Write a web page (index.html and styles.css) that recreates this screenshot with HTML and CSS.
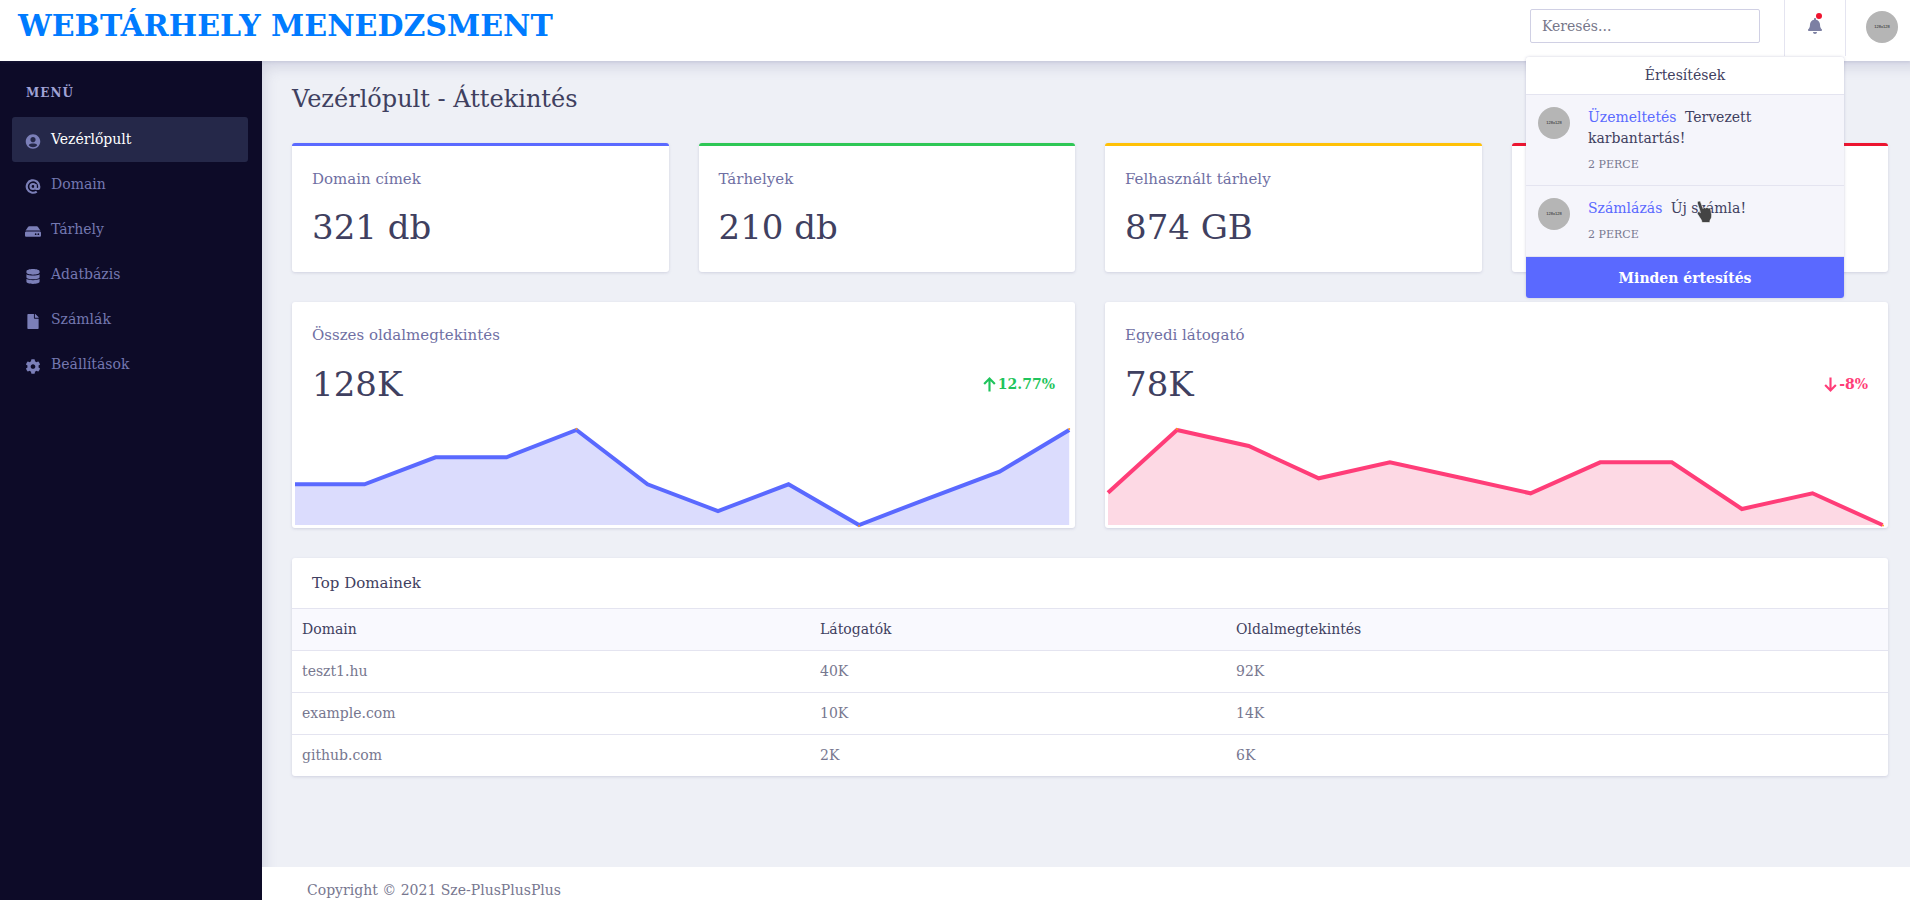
FILE: index.html
```html
<!DOCTYPE html>
<html lang="hu">
<head>
<meta charset="UTF-8">
<meta name="viewport" content="width=device-width, initial-scale=1.0">
<title>Webtárhely menedzsment</title>
<link rel="stylesheet" href="styles.css">
</head>
<body>
<header class="topbar">
    <div class="brand">WEBTÁRHELY MENEDZSMENT</div>
    <input class="search" type="text" placeholder="Keresés...">
    <div class="bell-box">
        <svg class="bell" viewBox="0 0 448 512"><path d="M224 512c35.32 0 63.97-28.65 63.97-64H160.03c0 35.35 28.65 64 63.97 64zm215.39-149.71c-19.32-20.76-55.47-51.99-55.47-154.29 0-77.7-54.48-139.9-127.94-155.16V32c0-17.67-14.32-32-31.98-32s-31.98 14.33-31.98 32v20.84C118.56 68.1 64.08 130.3 64.08 208c0 102.3-36.15 133.53-55.47 154.29-6 6.45-8.66 14.16-8.61 21.71.11 16.4 12.98 32 32.1 32h383.8c19.12 0 32-15.6 32.1-32 .05-7.55-2.61-15.27-8.61-21.71z"/></svg>
        <span class="dot"></span>
    </div>
    <div class="user-box"><div class="avatar">128x128</div></div>

    <!-- ertesitesek lenyilo -->
    <div class="notif">
        <div class="notif-head">Értesítések</div>
        <div class="notif-item">
            <div class="avatar">128x128</div>
            <div class="notif-body">
                <div class="notif-text"><a>Üzemeltetés</a> Tervezett karbantartás!</div>
                <div class="notif-time">2 PERCE</div>
            </div>
        </div>
        <div class="notif-item short">
            <div class="avatar">128x128</div>
            <div class="notif-body">
                <div class="notif-text"><a>Számlázás</a> Új számla!</div>
                <div class="notif-time">2 PERCE</div>
            </div>
        </div>
        <div class="notif-all">Minden értesítés</div>
    </div>
</header>

<div class="wrapper">
    <aside class="sidebar">
        <div class="menu-title">MENÜ</div>
        <a class="menu-item active">
            <svg viewBox="0 0 496 512"><path d="M248 8C111 8 0 119 0 256s111 248 248 248 248-111 248-248S385 8 248 8zm0 96c48.6 0 88 39.4 88 88s-39.4 88-88 88-88-39.4-88-88 39.4-88 88-88zm0 344c-58.7 0-111.3-26.6-146.5-68.2 18.8-35.4 55.6-59.8 98.5-59.8 2.4 0 4.8.4 7.1 1.1 13 4.2 26.6 6.9 40.9 6.9 14.3 0 28-2.7 40.9-6.9 2.3-.7 4.7-1.1 7.1-1.1 42.9 0 79.7 24.4 98.5 59.8C359.3 421.4 306.7 448 248 448z"/></svg>
            Vezérlőpult
        </a>
        <a class="menu-item">
            <svg class="stroke" viewBox="0 0 24 24"><circle cx="12" cy="12" r="4"/><path d="M16 8v5a3 3 0 0 0 6 0v-1a10 10 0 1 0-4 8"/></svg>
            Domain
        </a>
        <a class="menu-item">
            <svg viewBox="0 0 576 512"><path d="M576 304v96c0 26.51-21.49 48-48 48H48c-26.51 0-48-21.49-48-48v-96c0-26.51 21.49-48 48-48h480c26.51 0 48 21.49 48 48zm-48-80a79.557 79.557 0 0 1 30.777 6.165L462.25 85.374A48.003 48.003 0 0 0 422.311 64H153.689a48 48 0 0 0-39.938 21.374L17.223 230.165A79.557 79.557 0 0 1 48 224h480zm-48 96c-17.673 0-32 14.327-32 32s14.327 32 32 32 32-14.327 32-32-14.327-32-32-32zm-96 0c-17.673 0-32 14.327-32 32s14.327 32 32 32 32-14.327 32-32-14.327-32-32-32z"/></svg>
            Tárhely
        </a>
        <a class="menu-item">
            <svg viewBox="0 0 448 512"><path d="M448 73.143v45.714C448 159.143 347.667 192 224 192S0 159.143 0 118.857V73.143C0 32.857 100.333 0 224 0s224 32.857 224 73.143zM448 176v102.857C448 319.143 347.667 352 224 352S0 319.143 0 278.857V176c48.125 33.143 136.208 48.572 224 48.572S399.874 209.143 448 176zm0 160v102.857C448 479.143 347.667 512 224 512S0 479.143 0 438.857V336c48.125 33.143 136.208 48.572 224 48.572S399.874 369.143 448 336z"/></svg>
            Adatbázis
        </a>
        <a class="menu-item">
            <svg viewBox="0 0 384 512"><path d="M224 136V0H24C10.7 0 0 10.7 0 24v464c0 13.3 10.7 24 24 24h336c13.3 0 24-10.7 24-24V160H248c-13.2 0-24-10.8-24-24zm160-14.1v6.1H256V0h6.1c6.4 0 12.5 2.5 17 7l97.9 98c4.5 4.5 7 10.6 7 16.9z"/></svg>
            Számlák
        </a>
        <a class="menu-item">
            <svg viewBox="0 0 512 512"><path d="M487.4 315.7l-42.6-24.6c4.3-23.2 4.3-47 0-70.2l42.6-24.6c4.9-2.8 7.1-8.6 5.5-14-11.1-35.6-30-67.8-54.7-94.6-3.8-4.1-10-5.1-14.8-2.3L380.8 110c-17.9-15.4-38.5-27.3-60.8-35.1V25.8c0-5.6-3.9-10.5-9.4-11.7-36.7-8.2-74.3-7.8-109.2 0-5.5 1.2-9.4 6.1-9.4 11.7V75c-22.2 7.9-42.8 19.8-60.8 35.1L88.7 85.5c-4.9-2.8-11-1.9-14.8 2.3-24.7 26.7-43.6 58.9-54.7 94.6-1.7 5.4.6 11.2 5.5 14L67.3 221c-4.3 23.2-4.3 47 0 70.2l-42.6 24.6c-4.9 2.8-7.1 8.6-5.5 14 11.1 35.6 30 67.8 54.7 94.6 3.8 4.1 10 5.1 14.8 2.3l42.6-24.6c17.9 15.4 38.5 27.3 60.8 35.1v49.2c0 5.6 3.9 10.5 9.4 11.7 36.7 8.2 74.3 7.8 109.2 0 5.5-1.2 9.4-6.1 9.4-11.7v-49.2c22.2-7.9 42.8-19.8 60.8-35.1l42.6 24.6c4.9 2.8 11 1.9 14.8-2.3 24.7-26.7 43.6-58.9 54.7-94.6 1.5-5.5-.7-11.3-5.6-14.1zM256 336c-44.1 0-80-35.9-80-80s35.9-80 80-80 80 35.9 80 80-35.9 80-80 80z"/></svg>
            Beállítások
        </a>
    </aside>

    <main class="main">
        <div class="content">
            <h1 class="page-title">Vezérlőpult - Áttekintés</h1>

            <div class="stats">
                <div class="card stat blue">
                    <div class="label">Domain címek</div>
                    <div class="value">321 db</div>
                </div>
                <div class="card stat green">
                    <div class="label">Tárhelyek</div>
                    <div class="value">210 db</div>
                </div>
                <div class="card stat yellow">
                    <div class="label">Felhasznált tárhely</div>
                    <div class="value">874 GB</div>
                </div>
                <div class="card stat red">
                    <div class="label">Bevétel</div>
                    <div class="value">12 db</div>
                </div>
            </div>

            <div class="charts">
                <div class="card chart-card">
                    <div class="label">Összes oldalmegtekintés</div>
                    <div class="chart-row">
                        <div class="value">128K</div>
                        <div class="change up">
                            <svg viewBox="0 0 12 14"><path d="M6 13.500V1.500M1 6.500 6 1.500l5 5"/></svg>12.77%
                        </div>
                    </div>
                    <svg class="chart" viewBox="0 0 775 100">
                        <path class="area-blue" d="M0 54.300H69.500L140.500 27.300H211.500L281.500 0L352.500 54.300L423 81L493.500 54.300L564 95L633.500 68.300L704.500 41.700L774.200 0V95H0Z"/>
                        <path class="line-blue" d="M0 54.300H69.500L140.500 27.300H211.500L281.500 0L352.500 54.300L423 81L493.500 54.300L564 95L633.500 68.300L704.500 41.700L774.200 0"/>
                        <circle class="tip" cx="281.500" cy="-1" r="1"/>
                        <circle class="tip" cx="564" cy="96" r="1"/>
                        <circle class="tip" cx="774.200" cy="-1" r="1"/>
                    </svg>
                </div>
                <div class="card chart-card">
                    <div class="label">Egyedi látogató</div>
                    <div class="chart-row">
                        <div class="value">78K</div>
                        <div class="change down">
                            <svg viewBox="0 0 12 14"><path d="M6 .500v12M1 7.500l5 5 5-5"/></svg>-8%
                        </div>
                    </div>
                    <svg class="chart" viewBox="0 0 775 100">
                        <path class="area-pink" d="M0 62.700L69 0L140.700 16L210.700 48.300L281.900 32.300L352.500 47.700L422.600 63.300L492.200 32.300H563.800L633.900 79L704.500 63.300L774.600 95V95H0Z"/>
                        <path class="line-pink" d="M0 62.700L69 0L140.700 16L210.700 48.300L281.900 32.300L352.500 47.700L422.600 63.300L492.200 32.300H563.800L633.900 79L704.500 63.300L774.600 95"/>
                        <circle class="tip" cx="69" cy="-1" r="1"/>
                        <circle class="tip" cx="775" cy="95.500" r="1"/>
                    </svg>
                </div>
            </div>

            <div class="card table-card">
                <div class="table-title">Top Domainek</div>
                <table>
                    <thead>
                        <tr><th class="col1">Domain</th><th class="col2">Látogatók</th><th>Oldalmegtekintés</th></tr>
                    </thead>
                    <tbody>
                        <tr><td>teszt1.hu</td><td>40K</td><td>92K</td></tr>
                        <tr><td>example.com</td><td>10K</td><td>14K</td></tr>
                        <tr><td>github.com</td><td>2K</td><td>6K</td></tr>
                    </tbody>
                </table>
            </div>
        </div>
        <footer class="footer">Copyright © 2021 Sze-PlusPlusPlus</footer>
    </main>
</div>

<!-- egermutato a kepernyofoton -->
<svg class="cursor" viewBox="0 0 18 24">
    <path d="M3 1.500c1-.8 2.300-.3 2.700.8L8 8.500c.3-1.200 2-1.400 2.600-.3.500-1 2-1 2.600.1.700-.7 2-.4 2.400.7l1 5.500c.3 2-.3 4.300-1.500 5.500l-.3 2.500H7l-.5-2.200L2.500 14c-.8-1.200.3-2.700 1.700-2.100l1.300.8L2.500 3.500c-.2-.8 0-1.600.5-2z"/>
</svg>
</body>
</html>
```

FILE: styles.css
```css
* {
    box-sizing: border-box;
}
body {
    margin: 0;
    height: 900px;
    overflow: hidden;
    font-family: "DejaVu Serif", serif;
    font-size: 14px;
    color: #3f4060;
    background: #eef0f6;
}

/* felso sav */
.topbar {
    position: relative;
    z-index: 5;
    display: flex;
    align-items: flex-start;
    height: 61px;
    background: #fff;
    box-shadow: 0 1px 3px rgba(90, 90, 140, 0.15);
}
.brand {
    flex: 1;
    padding: 5px 0 0 18px;
    font-size: 30px;
    font-weight: bold;
    line-height: 42px;
    color: #007bff;
}
.search {
    width: 230px;
    height: 34px;
    margin-top: 9px;
    padding: 0 11px;
    border: 1px solid #d0d0e4;
    border-radius: 2px;
    font-family: inherit;
    font-size: 14px;
    outline: none;
}
.search::placeholder {
    color: #77778a;
}
.bell-box {
    position: relative;
    width: 62px;
    height: 56px;
    margin-left: 24px;
    border-left: 1px solid #e4e4f0;
    border-right: 1px solid #e4e4f0;
}
.bell {
    position: absolute;
    top: 18px;
    left: 23px;
    width: 14px;
    height: 16px;
    fill: #7d80a3;
}
.dot {
    position: absolute;
    top: 13px;
    left: 31px;
    width: 6px;
    height: 6px;
    border-radius: 50%;
    background: #f0142f;
}
.user-box {
    width: 64px;
    padding: 11px 0 0 20px;
}
.avatar {
    flex: none;
    width: 32px;
    height: 32px;
    border-radius: 50%;
    background: #b5b5b5;
    color: #222;
    font-family: "Liberation Sans", sans-serif;
    font-size: 4px;
    line-height: 32px;
    text-align: center;
}

/* ertesitesek */
.notif {
    position: absolute;
    top: 57px;
    left: 1526px;
    width: 318px;
    height: 241px;
    background: #f5f5fb;
    border-radius: 3px;
    box-shadow: 0 0 3px rgba(90, 90, 140, 0.3);
    overflow: hidden;
}
.notif-head {
    height: 38px;
    background: #fff;
    border-bottom: 1px solid #e4e4f0;
    line-height: 37px;
    text-align: center;
}
.notif-item {
    display: flex;
    height: 91px;
    padding: 12px 12px 0;
    border-bottom: 1px solid #e4e4f0;
}
.notif-item.short {
    height: 71px;
}
.notif-body {
    flex: 1;
    padding: 0 10px 0 18px;
}
.notif-text {
    line-height: 21px;
}
.notif-text a {
    margin-right: 4px;
    color: #5a69ff;
}
.notif-time {
    margin-top: 8px;
    font-size: 11px;
    line-height: 16px;
    color: #77778f;
}
.notif-all {
    height: 41px;
    background: #5a69ff;
    color: #fff;
    font-weight: bold;
    line-height: 42px;
    text-align: center;
}

/* oldalsav es tartalom */
.wrapper {
    display: flex;
    height: 839px;
}
.sidebar {
    flex: none;
    width: 262px;
    padding: 0 14px 0 12px;
    background: #0d0b28;
}
.menu-title {
    height: 56px;
    padding: 24px 14px 0;
    font-size: 12px;
    font-weight: bold;
    letter-spacing: 1px;
    line-height: 17px;
    color: #a0a3d6;
}
.menu-item {
    display: flex;
    align-items: center;
    height: 45px;
    padding: 0 13px 2px;
    border-radius: 3px;
    color: #7478b0;
}
.menu-item svg {
    flex: none;
    width: 16px;
    height: 15px;
    margin: 5px 10px 0 0;
    fill: #7b7fb8;
}
.menu-item svg.stroke {
    fill: none;
    stroke: #7b7fb8;
    stroke-width: 3.5;
}
.menu-item.active {
    background: #252849;
    color: #fff;
}
.main {
    flex: 1;
    display: flex;
    flex-direction: column;
    min-width: 0;
    box-shadow: inset 10px 14px 14px -8px rgba(90, 90, 140, 0.18);
}
.content {
    flex: 1;
    padding: 23px 22px 0 30px;
}
.page-title {
    margin: 0 0 28px;
    font-size: 24px;
    font-weight: normal;
    line-height: 31px;
}
.card {
    background: #fff;
    border-radius: 3px;
    box-shadow: 0 1px 3px rgba(90, 90, 140, 0.2);
}
.label {
    font-size: 15px;
    line-height: 20px;
    color: #6f6fa3;
}
.value {
    font-size: 34px;
    line-height: 46px;
}
.stats {
    display: grid;
    grid-template-columns: repeat(4, 1fr);
    gap: 30px;
}
.stat {
    height: 129px;
    padding: 23px 20px 0;
    border-top: 3px solid #5a69ff;
}
.stat .value {
    margin-top: 15px;
}
.stat.green { border-top-color: #2ec755; }
.stat.yellow { border-top-color: #ffc107; }
.stat.red { border-top-color: #ec1530; }

.charts {
    display: grid;
    grid-template-columns: 1fr 1fr;
    gap: 30px;
    margin-top: 30px;
}
.chart-card {
    height: 226px;
    padding: 23px 0 0;
}
.chart-card .label {
    padding: 0 20px;
}
.chart-row {
    display: flex;
    justify-content: space-between;
    align-items: center;
    margin-top: 16px;
    padding: 0 20px;
}
.change {
    display: flex;
    align-items: center;
    font-weight: bold;
    font-size: 14px;
}
.change svg {
    width: 13px;
    height: 15px;
    margin-right: 2px;
    fill: none;
    stroke: currentColor;
    stroke-width: 2;
}
.up { color: #1fc45c; }
.down { color: #ff3d78; }
.chart {
    display: block;
    width: 775px;
    height: 100px;
    margin: 23px 0 0 2.500px;
    overflow: visible;
}
.area-blue { fill: #dbdcfd; }
.area-pink { fill: #fdd9e4; }
.line-blue,
.line-pink {
    fill: none;
    stroke-width: 4;
}
.line-blue { stroke: #5a69ff; }
.line-pink { stroke: #ff3d78; }
.tip { fill: #ff9a1f; }

.table-card {
    margin-top: 30px;
    height: 218px;
    overflow: hidden;
}
.table-title {
    height: 50px;
    padding: 0 20px;
    font-size: 15px;
    line-height: 50px;
}
table {
    width: 100%;
    border-collapse: collapse;
    table-layout: fixed;
}
th, td {
    height: 42px;
    padding: 0 10px 2px;
    border-top: 1px solid #e4e4f0;
    font-weight: normal;
    text-align: left;
}
th {
    background: #f9f9fe;
}
td {
    color: #77778f;
}
.col1 { width: 518px; }
.col2 { width: 416px; }

.footer {
    flex: none;
    height: 33px;
    padding: 13px 0 0 45px;
    background: #fff;
    line-height: 21px;
    color: #77778f;
}

.cursor {
    position: absolute;
    top: 200px;
    left: 1695px;
    width: 18px;
    height: 24px;
    z-index: 10;
    fill: #444;
    stroke: #fff;
    stroke-width: 0.6;
}
```
